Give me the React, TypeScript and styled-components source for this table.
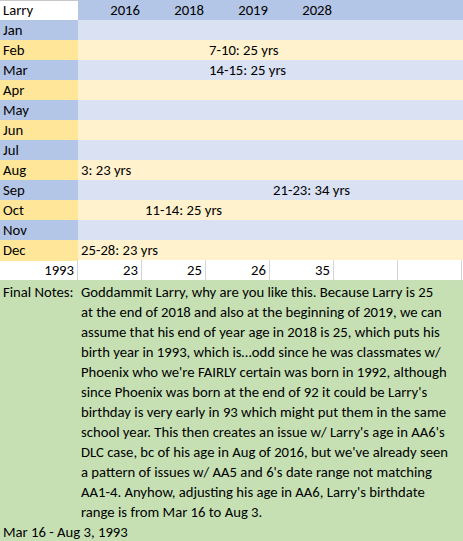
import React from 'react';
import styled, {createGlobalStyle} from 'styled-components';

const GlobalStyle = createGlobalStyle`
  html, body {
    margin: 0;
    padding: 0;
    background: #ffffff;
  }
  body {
    font-family: Carlito, Lato, "Liberation Sans", sans-serif;
    font-size: 14.7px;
    color: #000000;
  }
`

const colors = {
    headBlue: '#b4c6e7',
    lightBlue: '#d9e1f2',
    gold: '#ffe699',
    lightGold: '#fff2cc',
    green: '#c6e0b4',
    grid: '#d4d4d4',
}

type Entry = { col: number, text: string }

type MonthType = {
    name: string
    entry?: Entry
}

const years = ['2016', '2018', '2019', '2028']
const footer = ['1993', '23', '25', '26', '35', '', '']

const months: MonthType[] = [
    {name: 'Jan'},
    {name: 'Feb', entry: {col: 4, text: '7-10: 25 yrs'}},
    {name: 'Mar', entry: {col: 4, text: '14-15: 25 yrs'}},
    {name: 'Apr'},
    {name: 'May'},
    {name: 'Jun'},
    {name: 'Jul'},
    {name: 'Aug', entry: {col: 2, text: '3: 23 yrs'}},
    {name: 'Sep', entry: {col: 5, text: '21-23: 34 yrs'}},
    {name: 'Oct', entry: {col: 3, text: '11-14: 25 yrs'}},
    {name: 'Nov'},
    {name: 'Dec', entry: {col: 2, text: '25-28: 23 yrs'}},
]

const notes = [
    "Goddammit Larry, why are you like this. Because Larry is 25",
    "at the end of 2018 and also at the beginning of 2019, we can",
    "assume that his end of year age in 2018 is 25, which puts his",
    "birth year in 1993, which is\u2026odd since he was classmates w/",
    "Phoenix who we're FAIRLY certain was born in 1992, although",
    "since Phoenix was born at the end of 92 it could be Larry's",
    "birthday is very early in 93 which might put them in the same",
    "school year. This then creates an issue w/ Larry's age in AA6's",
    "DLC case, bc of his age in Aug of 2016, but we've already seen",
    "a pattern of issues w/ AA5 and 6's date range not matching",
    "AA1-4. Anyhow, adjusting his age in AA6, Larry's birthdate",
    "range is from Mar 16 to Aug 3.",
]

export default function App() {
    return (
        <Sheet>
            <GlobalStyle/>
            <Row bg={colors.headBlue}>
                <NameCell>Larry</NameCell>
                {years.map(y => (
                    <YearCell key={y}>{y}</YearCell>
                ))}
            </Row>
            {months.map((m, i) => {
                const odd = i % 2 === 0
                return (
                    <Row key={m.name} bg={odd ? colors.lightBlue : colors.lightGold}>
                        <MonthCell bg={odd ? colors.headBlue : colors.gold}>{m.name}</MonthCell>
                        {m.entry && <Entry style={{gridColumnStart: m.entry.col}}>{m.entry.text}</Entry>}
                    </Row>
                )
            })}
            <Row bg="#ffffff">
                {footer.map((v, i) => (
                    <TotalCell key={i}>{v}</TotalCell>
                ))}
            </Row>
            <Notes>
                <NoteLabel>Final Notes:</NoteLabel>
                <NoteText>
                    {notes.map((line, i) => (
                        <NoteLine key={i}>{line}</NoteLine>
                    ))}
                </NoteText>
            </Notes>
            <Result>Mar 16 - Aug 3, 1993</Result>
        </Sheet>
    );
}

const Sheet = styled.div`
  width: 463px;
  height: 541px;
  overflow: hidden;
  background: ${colors.green};
`

const Row = styled.div<{ bg: string }>`
  display: grid;
  grid-template-columns: 78px repeat(6, 64px) 1fr;
  height: 20px;
  line-height: 21px;
  background: ${props => props.bg};
  white-space: nowrap;
`

const Cell = styled.div`
  padding: 0 3px;
  overflow: visible;
`

const NameCell = styled(Cell)`
  background: #ffffff;
  box-shadow: inset 0 1px 0 #c8c8c8;
`

const YearCell = styled(Cell)`
  text-align: right;
  padding-right: 2px;
`

const MonthCell = styled(Cell)<{ bg: string }>`
  background: ${props => props.bg};
`

const Entry = styled(Cell)`
  grid-column-end: -1;
`

const TotalCell = styled(Cell)`
  text-align: right;
  padding-right: 3px;
  border-right: 1px solid ${colors.grid};
`

const Notes = styled.div`
  display: grid;
  grid-template-columns: 78px 1fr;
  padding-top: 2px;
  line-height: 20px;
  white-space: nowrap;
`

const NoteLabel = styled.div`
  padding-left: 3px;
`

const NoteText = styled.div`
  display: flex;
  flex-direction: column;
  padding-left: 3px;
`

const NoteLine = styled.div`
  height: 20px;
`

const Result = styled.div`
  height: 20px;
  line-height: 20px;
  padding-left: 3px;
`
